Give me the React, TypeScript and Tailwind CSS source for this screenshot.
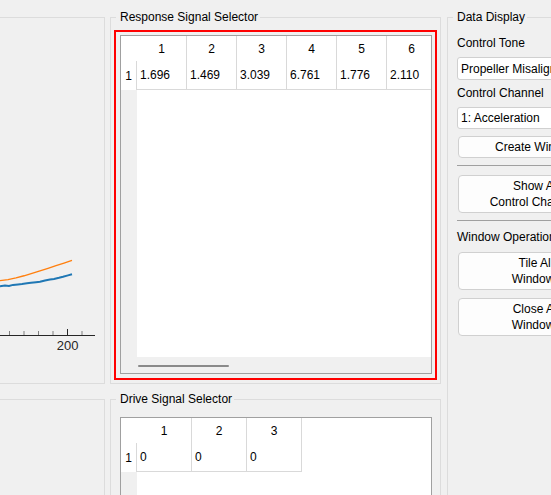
import { ChevronDown } from 'lucide-react';

const responseValues = ['1.696', '1.469', '3.039', '6.761', '1.776', '2.110'];
const driveValues = ['0', '0', '0'];

// orange trace, gently rising
const orangePts = [
  [0, 262.6], [8, 261.6], [16, 259.9], [24, 257.8], [32, 255.3], [40, 252.8],
  [48, 250.3], [56, 247.7], [64, 245.1], [72, 242.4],
];

// blue trace, a bit noisy
const bluePts = [
  [0, 268.2], [5, 267.6], [9, 268.0], [13, 266.9], [18, 266.4], [22, 266.0],
  [27, 265.3], [31, 264.8], [36, 264.2], [40, 263.8], [45, 262.6], [50, 261.6],
  [54, 260.9], [59, 259.8], [63, 258.8], [68, 257.4], [72, 256.3],
];

const toPoints = (pts: number[][]) => pts.map(([x, y]) => `${x},${y}`).join(' ');

function PlotPanel() {
  return (
    <svg width="104" height="365" className="block">
      <polyline points={toPoints(bluePts)} fill="none" stroke="#1f77b4" strokeWidth="2" />
      <polyline points={toPoints(orangePts)} fill="none" stroke="#ff7f0e" strokeWidth="1.4" />
      <line x1="0" y1="317.5" x2="95" y2="317.5" stroke="#262626" strokeWidth="1" />
      {[9.5, 24, 38.5, 53, 82].map((x) => (
        <line key={x} x1={x} y1="313" x2={x} y2="317" stroke="#808080" strokeWidth="1" />
      ))}
      <line x1="67.5" y1="311" x2="67.5" y2="317" stroke="#262626" strokeWidth="1" />
      <text x="67.7" y="332" textAnchor="middle" fontSize="13" fill="#262626" fontFamily="Liberation Sans, Arial, sans-serif">
        200
      </text>
    </svg>
  );
}

function SignalTable({ values, cellClass }: { values: string[]; cellClass: string }) {
  return (
    <div className="flex min-h-0 flex-1 overflow-hidden bg-white">
      {/* row header column */}
      <div className="flex w-[16px] shrink-0 flex-col">
        <div className="h-[25px] shrink-0" />
        <div className="flex h-[29px] shrink-0 items-center justify-center border-r border-[#d9d9d9]">1</div>
        <div className="flex-1 bg-[#f0f0f0]" />
      </div>
      <div className="flex min-w-0 flex-1 flex-col">
        <div className="flex">
          {values.map((_, i) => (
            <div key={i} className={`${cellClass} flex h-[25px] shrink-0 items-center justify-center border-r border-[#d9d9d9]`}>
              {i + 1}
            </div>
          ))}
        </div>
        <div className="flex">
          {values.map((v, i) => (
            <div key={i} className={`${cellClass} flex h-[29px] shrink-0 items-center border-r border-b border-[#d9d9d9] pl-[3px]`}>
              {v}
            </div>
          ))}
        </div>
      </div>
    </div>
  );
}

function Dropdown({ label, h }: { label: string; h: string }) {
  return (
    <div className={`${h} flex w-[158px] items-center justify-between rounded-[3px] border border-[#d0d0d0] bg-white pl-[3px] pr-[6px]`}>
      <span className="whitespace-nowrap">{label}</span>
      <ChevronDown size={12} className="text-[#5f5f5f]" />
    </div>
  );
}

function PushButton({ lines, h, className = '' }: { lines: string[]; h: string; className?: string }) {
  return (
    <button className={`${h} ${className} ml-[1px] flex w-[156px] flex-col items-center justify-center rounded-[4px] border border-[#d0d0d0] bg-[#fdfdfd] leading-[16px]`}>
      {lines.map((l) => (
        <span key={l} className="whitespace-nowrap">{l}</span>
      ))}
    </button>
  );
}

export default function App() {
  return (
    <div className="flex h-[495px] w-[551px] items-start overflow-hidden bg-[#f0f0f0] font-['Liberation_Sans',Arial,sans-serif] text-[12px] leading-[14px] text-black">
      {/* left plot panels */}
      <div className="flex w-[105px] shrink-0 flex-col gap-[15px] pt-[17px]">
        <div className="h-[367px] border-y border-r border-[#dcdcdc]">
          <PlotPanel />
        </div>
        <div className="h-[120px] border-t border-r border-[#dcdcdc]" />
      </div>

      {/* signal selectors */}
      <div className="ml-[5px] flex w-[331px] shrink-0 flex-col gap-[8px] pt-[10px]">
        <fieldset className="min-w-0 border border-[#dcdcdc]">
          <legend className="ml-[5px] pl-[4px] pr-[2px] leading-[14px]">Response Signal Selector</legend>
          <div className="pt-[6px] pr-[3px] pb-[3px] pl-[3px]">
            <div className="border-2 border-[#ff0000] pt-[3px] pr-[3px] pb-[4px] pl-[4px]">
              <div className="flex h-[339px] flex-col border border-[#a0a0a0]">
                <SignalTable values={responseValues} cellClass="w-[50px]" />
                <div className="h-[16px] shrink-0 bg-[#f0f0f0] pt-[8px] pl-[17px]">
                  <div className="h-[2px] w-[91px] rounded-full bg-[#8a8a8a]" />
                </div>
              </div>
            </div>
          </div>
        </fieldset>

        <fieldset className="min-w-0 border border-[#dcdcdc]">
          <legend className="ml-[5px] pl-[4px] pr-[2px] leading-[14px]">Drive Signal Selector</legend>
          <div className="pt-[6px] pr-[3px] pb-[3px] pl-[3px]">
            <div className="border-2 border-transparent pt-[3px] pr-[3px] pb-[4px] pl-[4px]">
              <div className="flex h-[200px] flex-col border border-[#a0a0a0]">
                <SignalTable values={driveValues} cellClass="w-[55px]" />
              </div>
            </div>
          </div>
        </fieldset>
      </div>

      {/* data display controls */}
      <div className="ml-[6px] w-[180px] shrink-0 pt-[10px]">
        <fieldset className="h-[520px] min-w-0 border border-[#dcdcdc]">
          <legend className="ml-[5px] pl-[4px] pr-[2px] leading-[14px]">Data Display</legend>
          <div className="flex flex-col items-start pl-[9px]">
            <div className="mt-[12px] h-[14px] whitespace-nowrap">Control Tone</div>
            <div className="mt-[7px]">
              <Dropdown label="Propeller Misalignment" h="h-[23px]" />
            </div>
            <div className="mt-[6px] h-[14px] whitespace-nowrap">Control Channel</div>
            <div className="mt-[7px]">
              <Dropdown label="1: Acceleration" h="h-[22px]" />
            </div>
            <PushButton lines={['Create Window']} h="h-[22px]" className="mt-[7px]" />
            <div className="mt-[7px] h-px w-[165px] bg-[#a0a0a0]" />
            <PushButton lines={['Show All', 'Control Channels']} h="h-[38px]" className="mt-[9px]" />
            <div className="mt-[7px] h-px w-[165px] bg-[#a0a0a0]" />
            <div className="mt-[9px] h-[14px] whitespace-nowrap">Window Operations</div>
            <PushButton lines={['Tile All', 'Windows']} h="h-[38px]" className="mt-[8px]" />
            <PushButton lines={['Close All', 'Windows']} h="h-[38px]" className="mt-[8px]" />
          </div>
        </fieldset>
      </div>
    </div>
  );
}
